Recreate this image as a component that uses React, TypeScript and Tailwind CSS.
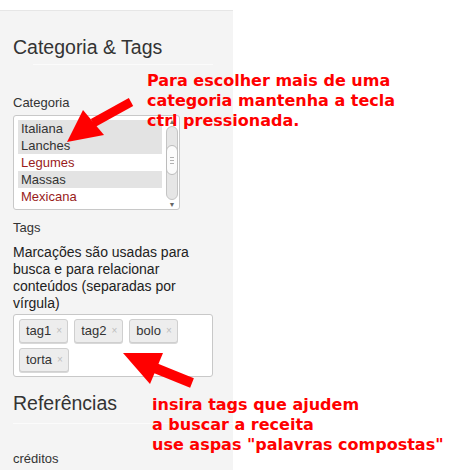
import React from "react";

const categories = [
  { name: "Italiana", selected: true },
  { name: "Lanches", selected: true },
  { name: "Legumes", selected: false },
  { name: "Massas", selected: true },
  { name: "Mexicana", selected: false },
];

const tags = ["tag1", "tag2", "bolo", "torta"];

function Tag({ label }: { label: string }) {
  return (
    <span className="flex h-[24px] items-center gap-[5px] rounded-[3px] border border-[#cfcfcf] bg-[#ededed] pl-[6px] pr-[5px] text-[13px] leading-[16px] text-[#333] shadow-[0_1px_0_#d8d8d8]">
      {label}
      <span className="text-[10px] leading-none text-[#bdbdbd]">×</span>
    </span>
  );
}

function Scrollbar() {
  return (
    <div className="ml-[4px] mt-[1px] flex h-[92px] w-[12px] flex-col items-center">
      <div className="flex h-[9px] items-center text-[7px] leading-none text-[#777]">▲</div>
      <div className="flex w-full flex-1 flex-col items-center rounded-full border border-[#c4c4c4] bg-[#e6e6e6]">
        <div className="mt-[18px] flex h-[30px] w-[12px] flex-col items-center justify-center gap-[2px] rounded-full border border-[#bcbcbc] bg-[#fbfbfb]">
          <span className="h-px w-[4px] bg-[#b0b0b0]" />
          <span className="h-px w-[4px] bg-[#b0b0b0]" />
          <span className="h-px w-[4px] bg-[#b0b0b0]" />
        </div>
      </div>
      <div className="flex h-[9px] items-center text-[7px] leading-none text-[#666]">▼</div>
    </div>
  );
}

function Annotations() {
  return (
    <>
      <svg
        className="pointer-events-none absolute left-0 top-0"
        width="461"
        height="470"
        viewBox="0 0 461 470"
      >
        <line x1="93" y1="123" x2="131" y2="102" stroke="#ff0000" strokeWidth="9" />
        <polygon points="67,142 83,110 104,135" fill="#ff0000" />
        <line x1="155" y1="368" x2="192" y2="383" stroke="#ff0000" strokeWidth="10" />
        <polygon points="123,353 163,353 150,384" fill="#ff0000" />
      </svg>
      <div className="pointer-events-none absolute left-[147px] top-[71px] whitespace-nowrap font-['DejaVu_Sans',sans-serif] text-[16px] font-bold leading-[20px] text-[#ff0000]">
        <div>Para escolher mais de uma</div>
        <div>categoria mantenha a tecla</div>
        <div>ctrl pressionada.</div>
      </div>
      <div className="pointer-events-none absolute left-[152px] top-[395px] whitespace-nowrap font-['DejaVu_Sans',sans-serif] text-[16px] font-bold leading-[20px] text-[#ff0000]">
        <div>insira tags que ajudem</div>
        <div>a buscar a receita</div>
        <div>use aspas "palavras compostas"</div>
      </div>
    </>
  );
}

export default function App() {
  return (
    <div className="relative h-[470px] w-[461px] overflow-hidden bg-white font-['Liberation_Sans',Arial,sans-serif]">
      <div className="mt-[10px] h-[460px] w-[233px] border-t border-[#e6e6e6] bg-[#f4f4f4] pl-[13px] pt-[25px]">
        <h2 className="text-[19.5px] font-normal leading-[22px] text-[#333]">Categoria &amp; Tags</h2>
        <div className="ml-[20px] mt-[6px] h-px w-[180px] bg-[#fbfbfb]" />

        <div className="mt-[30px] text-[13px] leading-[16px] text-[#333]">Categoria</div>
        <div className="mt-[4px] flex h-[95px] w-[167px] rounded-[3px] border border-[#c8c8c8] bg-white">
          <div className="w-[148px] pl-[4px] pt-[4px]">
            {categories.map((c) => (
              <div
                key={c.name}
                className={
                  c.selected
                    ? "h-[17px] bg-[#e3e3e3] pl-[3px] text-[13px] leading-[17px] text-[#333]"
                    : "h-[17px] pl-[3px] text-[13px] leading-[17px] text-[#991b1b]"
                }
              >
                {c.name}
              </div>
            ))}
          </div>
          <Scrollbar />
        </div>

        <div className="mt-[10px] text-[13px] leading-[16px] text-[#333]">Tags</div>
        <p className="mt-[8px] w-[200px] text-[14px] leading-[17px] text-[#222]">
          Marcações são usadas para busca e para relacionar conteúdos (separadas por vírgula)
        </p>
        <div className="mt-[2px] flex h-[63px] w-[200px] flex-wrap content-start gap-x-[6px] gap-y-[5px] rounded-[3px] border border-[#c8c8c8] bg-white pl-[5px] pt-[4px]">
          {tags.map((t) => (
            <Tag key={t} label={t} />
          ))}
        </div>

        <h2 className="mt-[15px] text-[19.5px] font-normal leading-[22px] text-[#333]">Referências</h2>
        <div className="mt-[9px] h-px w-[220px] bg-[#fbfbfb]" />
        <div className="mt-[27px] text-[13px] leading-[16px] text-[#333]">créditos</div>
      </div>
      <Annotations />
    </div>
  );
}
